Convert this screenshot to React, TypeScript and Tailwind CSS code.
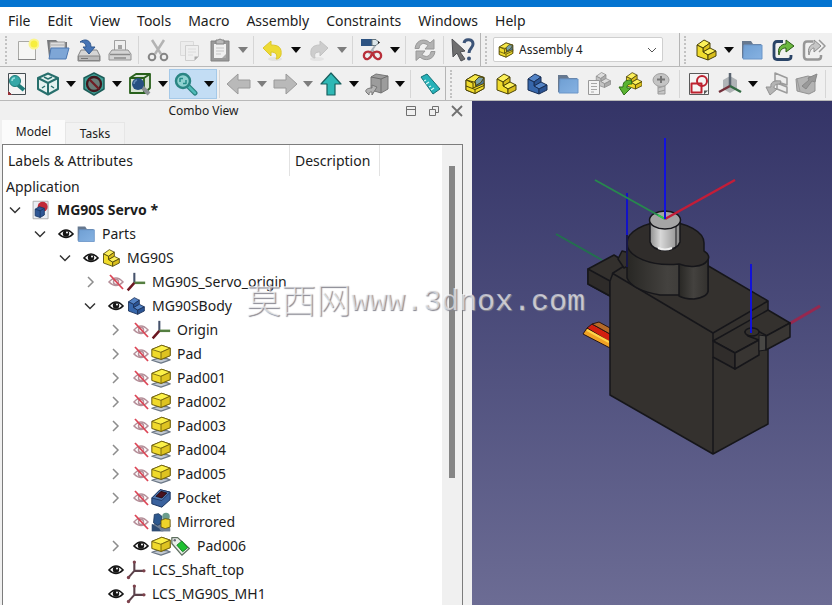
import { useState, type ReactNode } from "react";

type IconProps = { children: ReactNode; size?: string };

function Icon({ children, size = "size-6" }: IconProps) {
  return (
    <svg viewBox="0 0 24 24" className={`${size} shrink-0`} fill="none" strokeLinejoin="round" aria-hidden="true">
      {children}
    </svg>
  );
}

/* ---------- block shapes ---------- */

function BlockShape({ top, front, side, line }: { top: string; front: string; side: string; line: string }) {
  return (
    <g stroke={line} strokeWidth="1">
      <path d="M3 7l7-5 6 3-7 5z" fill={top} />
      <path d="M9 10l7-5v5l-7 4z" fill={side} />
      <path d="M9 14l7-4 6 3-8 4z" fill={top} />
      <path d="M3 7l6 3v4l5 3v5L3 18z" fill={front} />
      <path d="M14 17l8-4v5l-8 4z" fill={side} />
    </g>
  );
}

const YellowBlock = () => <BlockShape top="#fcf05a" front="#f0db2c" side="#d9be1c" line="#4d4408" />;
const BlueBlock = () => <BlockShape top="#5484c6" front="#3767ab" side="#2b5494" line="#182e55" />;
const GrayBlock = () => <BlockShape top="#dcdcdc" front="#c4c4c4" side="#acacac" line="#8c8c8c" />;

function AssemblyShape() {
  return (
    <g stroke="#4d4408" strokeWidth="1">
      <path d="M3 8 12 2.500l9 3v11L12 21.500 3 18z" fill="#e8cf25" />
      <path d="M3 8l9-5.500 9 3-8 5z" fill="#f7e94a" />
      <path d="M12 9l9-3.500v8l-8 2z" fill="#4c7aa5" />
      <path d="M12 9l4-4 5 .5-3 5-5 3z" fill="#7aa0a8" />
      <path d="M3 8l7 3v5l11-4.500v5L12 21.500 3 18z" fill="#f0db2c" />
      <path d="M3 14l9 3.500 9-4M12 17.500v4" />
    </g>
  );
}

function FolderShape() {
  return (
    <g>
      <path d="M2 3h9l2 3h8v14H2z" fill="#66788f" />
      <path d="M4 7h18v14H3z" fill="url(#folderBlue)" stroke="#6b95c8" />
    </g>
  );
}

/* ---------- toolbar icons ---------- */

const icons: Record<string, ReactNode> = {
  new: (
    <Icon>
      <path d="M3.500 3.500h17v18h-17z" fill="#f6f6f4" stroke="#a9a9a6" />
      <path d="M3 21.500h18" stroke="#858585" />
      <circle cx="19" cy="6" r="5.500" fill="#fbf58c" />
      <circle cx="19" cy="6" r="3.500" fill="#f6ee3f" />
    </Icon>
  ),
  open: (
    <Icon>
      <path d="M1 2h9l2 2h9v15H3z" fill="#76787b" />
      <path d="M4 4h15v8H4z" fill="#dedede" stroke="#999" />
      <path d="M5 7h13" stroke="#aaa" />
      <path d="M5 10h18l-3 11H3z" fill="#7ea6d6" stroke="#4d78b2" />
    </Icon>
  ),
  save: (
    <Icon>
      <path d="M4 12h16l3 6v5H1v-5z" fill="#d5d5d5" stroke="#858585" />
      <path d="M1.500 18h21v4.500h-21z" fill="#b9b9b9" stroke="#858585" />
      <path d="M4 20.500h7" stroke="#777" />
      <path d="M3 4c5-4 11-2 11 5h4l-6 7-6-7h3c0-3-2-5-6-5z" fill="#4674b5" stroke="#2f578f" />
    </Icon>
  ),
  print: (
    <Icon>
      <path d="M6.500 2.500h11v10h-11z" fill="#efefef" stroke="#a0a0a0" />
      <path d="M10 7h4v4h-4z" fill="#a4a4a4" />
      <path d="M4 12h16l3 4v6H1v-6z" fill="#d4d4d4" stroke="#929292" />
      <path d="M2 16.500h20M6 20h12" stroke="#8b8b8b" strokeWidth="1.500" />
    </Icon>
  ),
  cut: (
    <Icon>
      <path d="M6 2l9 14M18 2 9 16" stroke="#b3b3b3" strokeWidth="2.500" />
      <circle cx="6" cy="19" r="3.300" stroke="#858585" strokeWidth="2" />
      <circle cx="18" cy="19" r="3.300" stroke="#858585" strokeWidth="2" />
    </Icon>
  ),
  copy: (
    <Icon>
      <path d="M3.500 3.500h13v14h-13z" fill="#ececec" stroke="#dadada" />
      <path d="M8.500 7.500h13v11l-4 4h-9z" fill="#efefef" stroke="#cecece" />
      <path d="M11 11h8M11 14h8M11 17h5" stroke="#dcdcdc" />
      <path d="M17.500 22.500v-4h4z" fill="#aaa" />
    </Icon>
  ),
  paste: (
    <Icon>
      <path d="M3 3h18v20H3z" fill="#999" stroke="#828282" />
      <path d="M6 6h12v14H6z" fill="#f0f0f0" />
      <path d="M8 2h2l2-1 2 1h2v4H8z" fill="#b9b9b9" stroke="#828282" />
      <path d="M8 10h8M8 13h8M8 16h5" stroke="#c6c6c6" />
      <path d="M14 20l4-4v4z" fill="#aaa" />
    </Icon>
  ),
  undo: (
    <Icon>
      <ellipse cx="14" cy="21" rx="7" ry="2" fill="#e2e2e0" />
      <path d="M2 10 10 3v4c8 0 11 3 10 10-1 3-3 4-5 4 2-4 0-7-5-7v4z" fill="#eedb34" stroke="#dcc62a" />
    </Icon>
  ),
  redo: (
    <Icon>
      <ellipse cx="10" cy="21" rx="7" ry="2" fill="#e4e4e4" />
      <path d="M21 10 13 3v4C6 7 3 10 4 17c1 2 2 3 4 3-1-4 0-6 5-6v4z" fill="#cdcdcd" stroke="#c2c2c2" />
    </Icon>
  ),
  macro: (
    <Icon>
      <path d="M1 1h11v7H1z" fill="#2d5382" />
      <path d="M12 1.500h4l3 3-3 3h-4z" fill="#dce6ea" stroke="#65757d" />
      <path d="M18 3l2 1.500L18 6z" fill="#222" />
      <path d="M9 16l6-8M15 16l-3-5" stroke="#a8b0b6" strokeWidth="2" />
      <path d="M12 15c-4-3-9-1-8 4 2 4 7 2 8-4zM13 15c4-3 9-1 8 4-2 4-7 2-8-4z" stroke="#b82f3a" strokeWidth="2.200" />
    </Icon>
  ),
  refresh: (
    <Icon>
      <path d="M2 10.500C3 1 13 0 17 5l4-3.500v9.500h-9l3-3.500C11 4 7 5 6 10.500z" fill="#b2b2b2" stroke="#989898" />
      <path d="M22 13.500c-1 9-11 10-15 5.500L3 22.500V13h9l-3 3.500c4 3.500 8 2 9-3z" fill="#b2b2b2" stroke="#989898" />
    </Icon>
  ),
  help: (
    <Icon>
      <path d="M1 1l13 12-5 1 5 7-4 2-4-8-4 4z" fill="#6f6f70" stroke="#505155" />
      <path d="M13 5c1-5 9-4 9 1 0 4-4 4-4 9" stroke="#3c5478" strokeWidth="3" />
      <circle cx="18" cy="20.500" r="2" fill="#3c5478" />
    </Icon>
  ),
  part: <Icon><YellowBlock /></Icon>,
  body: <Icon><BlueBlock /></Icon>,
  assembly: <Icon><AssemblyShape /></Icon>,
  folder: <Icon><FolderShape /></Icon>,
  link: (
    <Icon>
      <path d="M12 3.500H6Q3 3.500 3 7v11q0 3.500 3 3.500h11q3 0 3-3V17" stroke="#2a4467" strokeWidth="2.800" />
      <path d="M8 17C6 10 10 6 15 6V2l8 6-8 6v-4c-4 0-6 2-7 7z" fill="#6bb83f" stroke="#2a5a15" />
    </Icon>
  ),
  linkGray: (
    <Icon>
      <path d="M11 3.500H5Q2 3.500 2 7v11q0 3.500 3 3.500h11q3 0 3-3V17" stroke="#979797" strokeWidth="2.500" />
      <path d="M7 17C5 10 9 6 12 6V2l7 6-7 6v-4c-2 0-4 2-5 7z" fill="#c6c6c6" stroke="#8c8c8c" />
      <path d="M17 2l6 6-6 6" stroke="#999" strokeWidth="1.500" />
    </Icon>
  ),
  fitAll: (
    <Icon>
      <path d="M3.500 1.500h17v21h-14l-3-3z" fill="#f4f4f4" stroke="#454e52" />
      <path d="M3 19l4 4H3z" fill="#9b3037" />
      <path d="M13 13l6 5" stroke="#1d7b79" strokeWidth="4" />
      <circle cx="10" cy="9" r="5.500" fill="#36a8a8" stroke="#1d7b79" />
      <path d="M7 9q0-3 3-3" stroke="#9de0de" strokeWidth="1.500" />
    </Icon>
  ),
  iso: (
    <Icon>
      <path d="M12 1.500 22 6v11l-10 5.500L2 17V6z" fill="#e4f2f0" stroke="#276f6c" strokeWidth="2" />
      <path d="M2 6l10 5 10-5M12 11v11" stroke="#276f6c" strokeWidth="2" />
      <path d="M8 5l4 2 4-2M6 16l3-2M18 16l-3-2" stroke="#276f6c" strokeWidth="1.500" />
    </Icon>
  ),
  drawStyle: (
    <Icon>
      <path d="M12 1 22 6v11l-10 6-10-6V6z" fill="#3f9f95" stroke="#1d5d59" strokeWidth="1.500" />
      <circle cx="12" cy="12" r="7" fill="#6a7d79" stroke="#40181d" strokeWidth="2.300" />
      <path d="M7 7l10 10" stroke="#701d25" strokeWidth="2.300" />
    </Icon>
  ),
  bbox: (
    <Icon>
      <path d="M2 6l6-4h14v14l-5 5H2z" fill="#d6e3d2" stroke="#28601b" strokeWidth="1.800" />
      <path d="M2 6h14v15M16 6l6-4" stroke="#28601b" strokeWidth="1.800" />
      <path d="M14 15l7 7" stroke="#8b9194" strokeWidth="4" />
      <circle cx="10" cy="12" r="6" fill="#275082" />
      <path d="M6 12q0-3 3-4" stroke="#5f86b3" strokeWidth="1.500" />
    </Icon>
  ),
  zoomSel: (
    <Icon>
      <path d="M14 14l7 7" stroke="#2a8280" strokeWidth="5" strokeLinecap="round" />
      <path d="M14 14l7 7" stroke="#4fb9b6" strokeWidth="2.500" strokeLinecap="round" />
      <circle cx="9" cy="9" r="7" fill="#8fd2d0" stroke="#2a8583" strokeWidth="2.500" />
      <path d="M6 10V6.500h3M12 8v3.500H9" stroke="#278d89" strokeWidth="1.500" />
    </Icon>
  ),
  back: (
    <Icon>
      <path d="M0 12 11 2v6h12v8H11v6z" fill="#b9b9b9" stroke="#9a9a9a" />
    </Icon>
  ),
  forward: (
    <Icon>
      <path d="M24 12 13 2v6H1v8h12v6z" fill="#b9b9b9" stroke="#9a9a9a" />
    </Icon>
  ),
  up: (
    <Icon>
      <path d="M12 1 22 12h-6v11H8V12H2z" fill="#2fb8b5" stroke="#185f5e" strokeWidth="1.200" />
    </Icon>
  ),
  linkView: (
    <Icon>
      <path d="M6 5l5-3 12 2v13l-7 4-10-3z" fill="#9c9c9c" stroke="#777" />
      <path d="M6 5l10 2 7-3M16 7v14" stroke="#6c6c6c" />
      <path d="M12 15l-5-2v3c-5 0-7 2-6 4l3 3c0-3 1-3 3-3v3z" fill="#b4b4b4" stroke="#777" />
    </Icon>
  ),
  ruler: (
    <Icon>
      <path d="M3 5 9 2l13 15-7 5z" fill="#26b1b8" stroke="#116f75" />
      <path d="M6 9l2-1M8 12l3-2M11 15l2-1M13 18l3-2" stroke="#d7f8f6" strokeWidth="1.300" />
    </Icon>
  ),
  insertPart: (
    <Icon>
      <g transform="translate(7 -1) scale(.75)"><GrayBlock /></g>
      <path d="M1.500 8.500h11v14h-11z" fill="#f4f4f4" stroke="#999" />
      <path d="M4 11.500h6M4 14.500h6M4 17.500h6M4 20h3" stroke="#a8a8a8" />
    </Icon>
  ),
  linkPart: (
    <Icon>
      <g transform="translate(6 -1) scale(.82)"><YellowBlock /></g>
      <path d="M13 8C6 8 5 11 5 15H1l5 8 7-7H9c0-3 1-4 5-4z" fill="#5ab331" stroke="#2d6d18" />
    </Icon>
  ),
  screw: (
    <Icon>
      <path d="M9 10h7v12H9z" fill="#c6c6c6" stroke="#9b9b9b" />
      <path d="M9 16l7-2M9 20l7-2" stroke="#9b9b9b" />
      <ellipse cx="12" cy="8" rx="8" ry="6.500" fill="#c4c4c4" stroke="#a0a0a0" />
      <path d="M12 4v7M8 7.500h8" stroke="#777" strokeWidth="2" />
    </Icon>
  ),
  sketch: (
    <Icon>
      <path d="M2.500 1.500h19v21h-19z" fill="#f5f5f5" stroke="#5a5a5a" />
      <path d="M4.500 11.500h10v9h-10z" stroke="#bd2230" strokeWidth="2" />
      <circle cx="15" cy="9" r="5" stroke="#bd2230" strokeWidth="2" />
      <path d="M17 22.500v-4h4z" fill="#555" />
    </Icon>
  ),
  lcs: (
    <Icon>
      <path d="M5 8l7-4 7 4v9l-7 4-7-4z" fill="#b0b4b7" />
      <path d="M12 14V1" stroke="#5a6470" strokeWidth="2.500" />
      <path d="M12 14 1 20" stroke="#73303a" strokeWidth="2.500" />
      <path d="M12 14l11 6" stroke="#326a43" strokeWidth="2.500" />
    </Icon>
  ),
  place: (
    <Icon>
      <path d="M11 1l12 5v7L11 9zM13 11l10 4v6l-10-4z" fill="#ededed" stroke="#9b9b9b" strokeWidth="1.500" />
      <path d="M17 9C9 8 6 11 7 15H2l4 8 7-6-3-1c0-3 2-4 6-4z" fill="#b4b4b4" stroke="#929292" />
    </Icon>
  ),
  release: (
    <Icon>
      <path d="M1 7l12-3 7 2v13l-6 3-12-3z" fill="#b3b3b3" stroke="#929292" />
      <path d="M13 6l9-4-2 8-3-1-6 8-4-3 7-6z" fill="#999" stroke="#888" />
      <path d="M2 7l3 12" stroke="#999" />
    </Icon>
  ),
};

function Tool({ icon, label }: { icon: string; label: string }) {
  return (
    <button type="button" aria-label={label} className="flex h-7 w-[31px] shrink-0 items-center justify-center">
      {icons[icon]}
    </button>
  );
}

function Drop({ label, dim = false }: { label: string; dim?: boolean }) {
  return (
    <button type="button" aria-label={label} className="flex h-7 w-[15px] shrink-0 items-center justify-center">
      <svg viewBox="0 0 10 6" className="h-[6px] w-[10px]" aria-hidden="true">
        <path d="M0 0h10L5 6z" fill={dim ? "#7d7d7d" : "#0a0a0a"} />
      </svg>
    </button>
  );
}

const Sep = () => <div className="mx-[3px] h-7 w-px shrink-0 bg-[#d6d6d6]" />;
const Edge = () => <div className="h-full w-px shrink-0 bg-[#b5b5b5]" />;
const Grip = () => (
  <div className="mx-1 h-7 w-0 shrink-0 border-l-2 border-dotted border-[#c2c2c2]" />
);

/* ---------- tree ---------- */

function Eye({ hidden }: { hidden?: boolean }) {
  return (
    <svg viewBox="0 0 18 16" className="h-4 w-[18px]" fill="none" aria-hidden="true">
      {hidden ? (
        <g>
          <path d="M2 8Q9 0 16 8 9 15 2 8z" stroke="#b58f99" strokeWidth="1.500" />
          <circle cx="9" cy="8" r="2.500" stroke="#b58f99" strokeWidth="1.500" />
          <path d="M3 1l13 14" stroke="#dc4656" strokeWidth="1.800" />
        </g>
      ) : (
        <g>
          <path d="M2 8Q9 0 16 8 9 15 2 8z" fill="#fff" stroke="#151515" strokeWidth="1.700" />
          <circle cx="9" cy="7.500" r="3.200" fill="#151515" />
          <circle cx="10" cy="6.500" r="1" fill="#fff" />
        </g>
      )}
    </svg>
  );
}

const PadIcon = () => (
  <Icon size="size-5">
    <path d="M1 19.500l6-2h12l4 1.500-11 4z" fill="#c3cad3" stroke="#6d7887" strokeWidth="1.500" />
    <path d="M1 6.500l12-5 10 3.500v9l-11 4.500L1 15z" fill="#f0d92c" stroke="#6b5c0c" strokeWidth="1.200" />
    <path d="M1 6.500l12-5 10 3.500-11 5z" fill="#fcf148" stroke="#6b5c0c" />
    <path d="M12 10l11-5v9l-11 4.500z" fill="#dec320" stroke="#6b5c0c" />
  </Icon>
);

const treeIcons: Record<string, ReactNode> = {
  doc: (
    <Icon size="size-5">
      <path d="M2.500 1.500h18v21h-18z" fill="#e9edf3" stroke="#a3a3a3" />
      <circle cx="14" cy="8" r="6" fill="#c22a38" />
      <path d="M5 11l5-3 6 2v8l-5 3-6-2z" fill="#2f5795" stroke="#173663" />
      <path d="M5 11l6 2 5-3M11 13v8" stroke="#173663" />
    </Icon>
  ),
  folder: <Icon size="size-5"><FolderShape /></Icon>,
  part: <Icon size="size-5"><YellowBlock /></Icon>,
  body: <Icon size="size-5"><BlueBlock /></Icon>,
  origin: (
    <Icon size="size-5">
      <path d="M10 13V1" stroke="#46536c" strokeWidth="2.500" />
      <path d="M10 13h13" stroke="#557f41" strokeWidth="3" />
      <path d="M10 13l-8 9" stroke="#6c1821" strokeWidth="3" />
    </Icon>
  ),
  lcs: (
    <Icon size="size-5">
      <path d="M10 13V2M10 13h12M10 13l-8 9" stroke="#5b414a" strokeWidth="2.500" />
      <circle cx="10" cy="2.500" r="2" fill="#7d424c" />
      <circle cx="21.500" cy="13" r="2" fill="#7d424c" />
      <circle cx="3" cy="21" r="2" fill="#7d424c" />
    </Icon>
  ),
  pad: <PadIcon />,
  pocket: (
    <Icon size="size-5">
      <path d="M1 12 11 2l12 3v9l-10 9-12-4z" fill="#3a629e" stroke="#1b3560" strokeWidth="1.200" />
      <path d="M1 12 11 2l12 3-10 10z" fill="#5078b0" stroke="#1b3560" />
      <path d="M6 10l6-6 7 2-6 6z" fill="#4a121d" stroke="#1d0a10" />
    </Icon>
  ),
  mirrored: (
    <Icon size="size-5">
      <path d="M1 16l7-4 15 3v8H1z" fill="#6f7f93" />
      <path d="M4 3l5-1 4 3v8l-5 3-5-3z" fill="#2d588e" stroke="#1a365d" />
      <circle cx="18" cy="5.500" r="4.500" fill="#6c9d8d" />
      <path d="M12 10l5-2 6 1v9l-6 2-5-2z" fill="#eed42a" stroke="#5e4e08" />
      <path d="M1 14l14 9H1z" fill="#2d4b73" />
      <path d="M10 20h13v3H12z" fill="#6f8096" />
    </Icon>
  ),
  tagged: (
    <span className="flex">
      <PadIcon />
      <Icon size="size-5">
        <path d="M1 2h7l14 13-9 8L1 9z" fill="#e9eee9" stroke="#5f6f60" strokeWidth="1.500" />
        <path d="M7 11l6-5 7 8-6 5z" fill="#1fc131" stroke="#0e7a1b" />
        <circle cx="4.500" cy="5" r="1.500" fill="#667" />
      </Icon>
    </span>
  ),
};

type Row = {
  label: string;
  icon: string;
  level: "0" | "1" | "2" | "3" | "4";
  arrow?: "open" | "closed";
  eye?: "on" | "off";
};

const indent = { "0": "pl-0", "1": "pl-[25px]", "2": "pl-[50px]", "3": "pl-[75px]", "4": "pl-[100px]" };

const rows: Row[] = [
  { label: "MG90S Servo *", icon: "doc", level: "0", arrow: "open" },
  { label: "Parts", icon: "folder", level: "1", arrow: "open", eye: "on" },
  { label: "MG90S", icon: "part", level: "2", arrow: "open", eye: "on" },
  { label: "MG90S_Servo_origin", icon: "origin", level: "3", arrow: "closed", eye: "off" },
  { label: "MG90SBody", icon: "body", level: "3", arrow: "open", eye: "on" },
  { label: "Origin", icon: "origin", level: "4", arrow: "closed", eye: "off" },
  { label: "Pad", icon: "pad", level: "4", arrow: "closed", eye: "off" },
  { label: "Pad001", icon: "pad", level: "4", arrow: "closed", eye: "off" },
  { label: "Pad002", icon: "pad", level: "4", arrow: "closed", eye: "off" },
  { label: "Pad003", icon: "pad", level: "4", arrow: "closed", eye: "off" },
  { label: "Pad004", icon: "pad", level: "4", arrow: "closed", eye: "off" },
  { label: "Pad005", icon: "pad", level: "4", arrow: "closed", eye: "off" },
  { label: "Pocket", icon: "pocket", level: "4", arrow: "closed", eye: "off" },
  { label: "Mirrored", icon: "mirrored", level: "4", eye: "off" },
  { label: "Pad006", icon: "tagged", level: "4", arrow: "closed", eye: "on" },
  { label: "LCS_Shaft_top", icon: "lcs", level: "3", eye: "on" },
  { label: "LCS_MG90S_MH1", icon: "lcs", level: "3", eye: "on" },
];

function TreeRow({ row }: { row: Row }) {
  return (
    <li
      role="treeitem"
      aria-level={Number(row.level) + 1}
      aria-expanded={row.arrow ? row.arrow === "open" : undefined}
      className={`flex h-6 items-center whitespace-nowrap ${indent[row.level]}`}
    >
      <span className="flex w-[28px] shrink-0 justify-center pr-1">
        {row.arrow && (
          <button type="button" aria-label={`Toggle ${row.label}`} className="flex size-4 items-center justify-center">
            <svg viewBox="0 0 12 12" className="size-3" fill="none" strokeWidth="1.500" aria-hidden="true">
              {row.arrow === "open" ? (
                <path d="M1 3.500l5 5 5-5" stroke="#333" />
              ) : (
                <path d="M4 1l5 5-5 5" stroke="#8d8d8d" />
              )}
            </svg>
          </button>
        )}
      </span>
      {row.eye && (
        <button type="button" aria-label={`Visibility of ${row.label}`} className="flex w-5 shrink-0 justify-center">
          <Eye hidden={row.eye === "off"} />
        </button>
      )}
      {treeIcons[row.icon]}
      <span className={row.level === "0" ? "pl-[6px] font-bold" : "pl-[6px]"}>{row.label}</span>
    </li>
  );
}

/* ---------- 3D model ---------- */

function ServoView() {
  return (
    <svg viewBox="472 101 360 504" className="h-full w-full" fill="none" strokeLinejoin="round" role="img" aria-label="3D view of the servo">
      <defs>
        <linearGradient id="shaft" x1="0" x2="1">
          <stop offset="0" stopColor="#8f8f8f" />
          <stop offset=".35" stopColor="#d8d8d8" />
          <stop offset="1" stopColor="#8a8a8a" />
        </linearGradient>
        <linearGradient id="gear" x1="0" x2="1">
          <stop offset="0" stopColor="#282724" />
          <stop offset=".5" stopColor="#44423f" />
          <stop offset="1" stopColor="#33312e" />
        </linearGradient>
      </defs>
      <path d="M556 234l46 26" stroke="#23704e" strokeWidth="2" />
      <path d="M789 324l31-18" stroke="#96284f" strokeWidth="3" />
      <g stroke="#2a1510">
        <path d="M583 334l4-6 23 13v7z" fill="#f0a224" />
        <path d="M587 328l5-4 18 10v8z" fill="#d2200f" />
        <path d="M592 324l7-2 11 6v6z" fill="#b56a28" />
      </g>
      <path d="M587 330l22 12" stroke="#ffd54a" strokeWidth="2" />
      <g stroke="#16161a" strokeWidth="1.500">
        <path d="M588 269l26-14 16 10v25l-20 6-22-12z" fill="#33302d" />
        <path d="M588 269l22 12v15l-22-12z" fill="#2e2b29" />
        <path d="M610 281l3-8 30-19 62 10 63 37v123l-55 30-103-59z" fill="#34312e" />
        <path d="M612 273l101 60 55-32" />
        <path d="M713 341l55-31 22 13-23 13-9-5-6-3-7 4 3 4 11 4-24 13z" fill="#34312e" />
        <path d="M713 341l22 12v16l-22-12z" fill="#302d2b" />
        <path d="M735 353l24-13v15l-24 14z" fill="#383532" />
        <path d="M759 340v-5l7 1v14l-7 1z" fill="#484744" strokeWidth="1" />
        <path d="M766 336l24-13v14l-24 13z" fill="#393633" />
        <path d="M713 333v8M713 357v97" />
        <ellipse cx="752" cy="332" rx="7" ry="4" fill="#34312e" />
        <path d="M618 259l4-8 8 2v12l-6 3z" fill="#34312e" />
        <path d="M627 243v35q5 12 33 17h19q4 3 15 3 14-2 14-8v-33l-29 6z" fill="url(#gear)" />
        <path d="M679 264v32q5 3 15 3 14-2 14-8v-34z" fill="url(#gear)" />
        <path d="M627 243c0-11 17-21 38-21 22 0 39 10 39 21v8c5 3 6 7 3 10-4 6-18 7-28 3-27 3-52-7-52-21z" fill="#302d2b" />
        <path d="M656 244v4q9 5 19 0v-4z" fill="#d4d4d4" />
        <path d="M650 220v22q2 8 15 8 13-1 15-8v-22z" fill="url(#shaft)" />
        <path d="M676 226v21" strokeWidth="1" />
        <ellipse cx="665" cy="220" rx="15.500" ry="9" fill="#a5a5a5" />
      </g>
      <path d="M658 248q7 3 14 0" stroke="#eee" strokeWidth="2" />
      <path d="M627 193v42" stroke="#1212c8" strokeWidth="2" />
      <path d="M627 235v32" stroke="#171747" strokeWidth="2" />
      <path d="M751 264v69" stroke="#1212d8" strokeWidth="2" />
      <path d="M595 180l70 39" stroke="#27884d" strokeWidth="2" />
      <path d="M665 219l70-39" stroke="#c31d38" strokeWidth="2.500" />
      <path d="M658 215l7 4" stroke="#31c74e" strokeWidth="2" />
      <path d="M665 138v81" stroke="#1212dd" strokeWidth="2" />
    </svg>
  );
}

/* ---------- page ---------- */

const menus = ["File", "Edit", "View", "Tools", "Macro", "Assembly", "Constraints", "Windows", "Help"];

export default function App() {
  const [tab, setTab] = useState("Model");

  return (
    <div className="flex h-screen flex-col overflow-hidden bg-[#f0f0f0] font-['Noto_Sans','Noto_Sans_CJK_SC',sans-serif] text-sm text-[#1c1c1c]">
      <svg className="absolute size-0" aria-hidden="true">
        <defs>
          <linearGradient id="folderBlue" x1="0" y1="0" x2="1" y2="1">
            <stop offset="0" stopColor="#6f9fd3" />
            <stop offset="1" stopColor="#86b2e2" />
          </linearGradient>
        </defs>
      </svg>

      <div className="h-[7px] shrink-0 bg-[#0474d0]" />

      <nav className="flex h-[26px] shrink-0 items-center gap-px bg-white pt-[2px]">
        {menus.map((menu) => (
          <button key={menu} type="button" className="px-2">
            {menu}
          </button>
        ))}
      </nav>

      <div role="toolbar" aria-label="File and workbench" className="flex h-[34px] shrink-0 items-center overflow-hidden border-b border-[#b9b9b9] pl-px">
        <Grip />
        <Tool icon="new" label="New" />
        <Tool icon="open" label="Open" />
        <Tool icon="save" label="Save" />
        <Tool icon="print" label="Print" />
        <Sep />
        <Tool icon="cut" label="Cut" />
        <Tool icon="copy" label="Copy" />
        <Tool icon="paste" label="Paste" />
        <Drop label="Paste options" dim />
        <Sep />
        <Tool icon="undo" label="Undo" />
        <Drop label="Undo history" />
        <Tool icon="redo" label="Redo" />
        <Drop label="Redo history" dim />
        <Sep />
        <Tool icon="macro" label="Edit macro" />
        <Drop label="Macro options" />
        <Sep />
        <Tool icon="refresh" label="Refresh" />
        <Sep />
        <Tool icon="help" label="What's this?" />
        <div className="w-[2px] shrink-0" />
        <Edge />
        <Grip />
        <div className="relative mr-4 ml-[2px] w-[170px] shrink-0">
          <span className="pointer-events-none absolute top-1 left-1">
            <Icon size="size-[18px]"><AssemblyShape /></Icon>
          </span>
          <select aria-label="Workbench" className="h-[25px] w-full appearance-none rounded-xs border border-[#cfcfcf] bg-white pl-[25px] text-xs">
            <option>Assembly 4</option>
          </select>
          <svg viewBox="0 0 10 6" className="pointer-events-none absolute top-[10px] right-[6px] h-[6px] w-[10px]" fill="none" aria-hidden="true">
            <path d="M1 1l4 4 4-4" stroke="#555" />
          </svg>
        </div>
        <Edge />
        <Grip />
        <Tool icon="part" label="New part" />
        <Drop label="Part options" />
        <Tool icon="folder" label="New group" />
        <Tool icon="link" label="Make link" />
        <Tool icon="linkGray" label="Make sub-link" />
      </div>

      <div role="toolbar" aria-label="View and assembly" className="flex h-[34px] shrink-0 items-center overflow-hidden border-b border-[#b9b9b9] pl-px">
        <Tool icon="fitAll" label="Fit all" />
        <Tool icon="iso" label="Isometric" />
        <Drop label="View options" />
        <Tool icon="drawStyle" label="Draw style" />
        <Drop label="Draw style options" />
        <Tool icon="bbox" label="Bounding box" />
        <Drop label="Bounding box options" />
        <div className="flex shrink-0 bg-[#c3ddf4] outline outline-[#a5c9e8]">
          <Tool icon="zoomSel" label="Fit selection" />
          <Drop label="Fit options" />
        </div>
        <Sep />
        <Tool icon="back" label="Back" />
        <Drop label="Back history" dim />
        <Tool icon="forward" label="Forward" />
        <Drop label="Forward history" dim />
        <Tool icon="up" label="Up" />
        <Drop label="Up options" />
        <Tool icon="linkView" label="Go to linked object" />
        <Drop label="Linked object options" />
        <Sep />
        <Tool icon="ruler" label="Measure" />
        <Edge />
        <Grip />
        <div className="flex shrink-0 items-center pl-[3px]">
          <Tool icon="assembly" label="New assembly" />
          <Tool icon="part" label="New part" />
          <Tool icon="body" label="New body" />
          <Tool icon="folder" label="New group" />
          <Tool icon="insertPart" label="Part information" />
          <Tool icon="linkPart" label="Insert link" />
          <Tool icon="screw" label="Insert screw" />
          <Sep />
          <Tool icon="sketch" label="New sketch" />
          <Tool icon="lcs" label="New coordinate system" />
          <Drop label="Datum options" />
          <Tool icon="place" label="Place" />
          <Tool icon="release" label="Release" />
          <Sep />
        </div>
      </div>

      <main className="relative flex min-h-0 flex-1">
        <section aria-label="Combo View" className="flex w-[472px] shrink-0 flex-col pl-[2px] pr-[9px]">
          <div className="flex h-[19px] shrink-0 items-center">
            <h2 className="flex-1 text-center text-xs">Combo View</h2>
            <div className="flex justify-end gap-[11px]">
              <button type="button" aria-label="Shade">
                <svg viewBox="0 0 12 12" className="size-3" fill="none" stroke="#707070" aria-hidden="true">
                  <path d="M1.500 1.500h9v9h-9zM1.500 4.500h9" />
                </svg>
              </button>
              <button type="button" aria-label="Float">
                <svg viewBox="0 0 12 12" className="size-3" fill="none" stroke="#707070" aria-hidden="true">
                  <path d="M1.500 4.500h6v6h-6zM4.500 4.500v-3h6v6h-3" />
                </svg>
              </button>
              <button type="button" aria-label="Close">
                <svg viewBox="0 0 12 12" className="size-3" fill="none" stroke="#707070" strokeWidth="1.800" aria-hidden="true">
                  <path d="M1 1l10 10M11 1L1 11" />
                </svg>
              </button>
            </div>
          </div>

          <div role="tablist" className="flex h-[24px] shrink-0 items-end text-xs">
            <button type="button" role="tab" aria-selected={tab === "Model"} onClick={() => setTab("Model")} className="h-[24px] w-[63px] bg-[#fbfbfb] px-3">
              Model
            </button>
            <button type="button" role="tab" aria-selected={tab === "Tasks"} onClick={() => setTab("Tasks")} className="h-[22px] w-[60px] border border-b-0 border-[#e6e6e6] bg-[#f2f2f2] px-3">
              Tasks
            </button>
          </div>

          <div className="flex min-h-0 flex-1 border border-b-0 border-[#7c7c7c] bg-white">
            <div className="min-w-0 flex-1 overflow-hidden">
              <div className="flex h-[31px] items-center">
                <span className="w-[286px] pl-[5px]">Labels &amp; Attributes</span>
                <span className="flex h-full w-[91px] items-center border-x border-[#e2e2e2] pl-[5px]">Description</span>
              </div>
              <div className="flex h-[22px] items-center pl-[3px]">Application</div>
              <ul role="tree" aria-label="Application">
                {rows.map((row) => (
                  <TreeRow key={row.label} row={row} />
                ))}
              </ul>
            </div>
            <div className="flex w-5 shrink-0 justify-center bg-[#f0f0f0] pt-[21px]">
              <div className="h-[71%] w-[6px] bg-[#868686]" />
            </div>
          </div>
        </section>

        <section aria-label="Model" className="min-w-0 flex-1 bg-linear-to-b from-[#343467] to-[#6c6c94]">
          <ServoView />
        </section>

        <div className="pointer-events-none absolute top-[181px] left-[246px] flex items-start whitespace-nowrap leading-10 text-white/60 [text-shadow:1px_1px_1px_#85858f]">
          <span className="font-['Noto_Sans_CJK_SC',sans-serif] text-[35px] leading-8 font-light">莫西网</span>
          <span className="font-['Liberation_Mono',monospace] text-[30px]">www.3dnox.com</span>
        </div>
      </main>
    </div>
  );
}
